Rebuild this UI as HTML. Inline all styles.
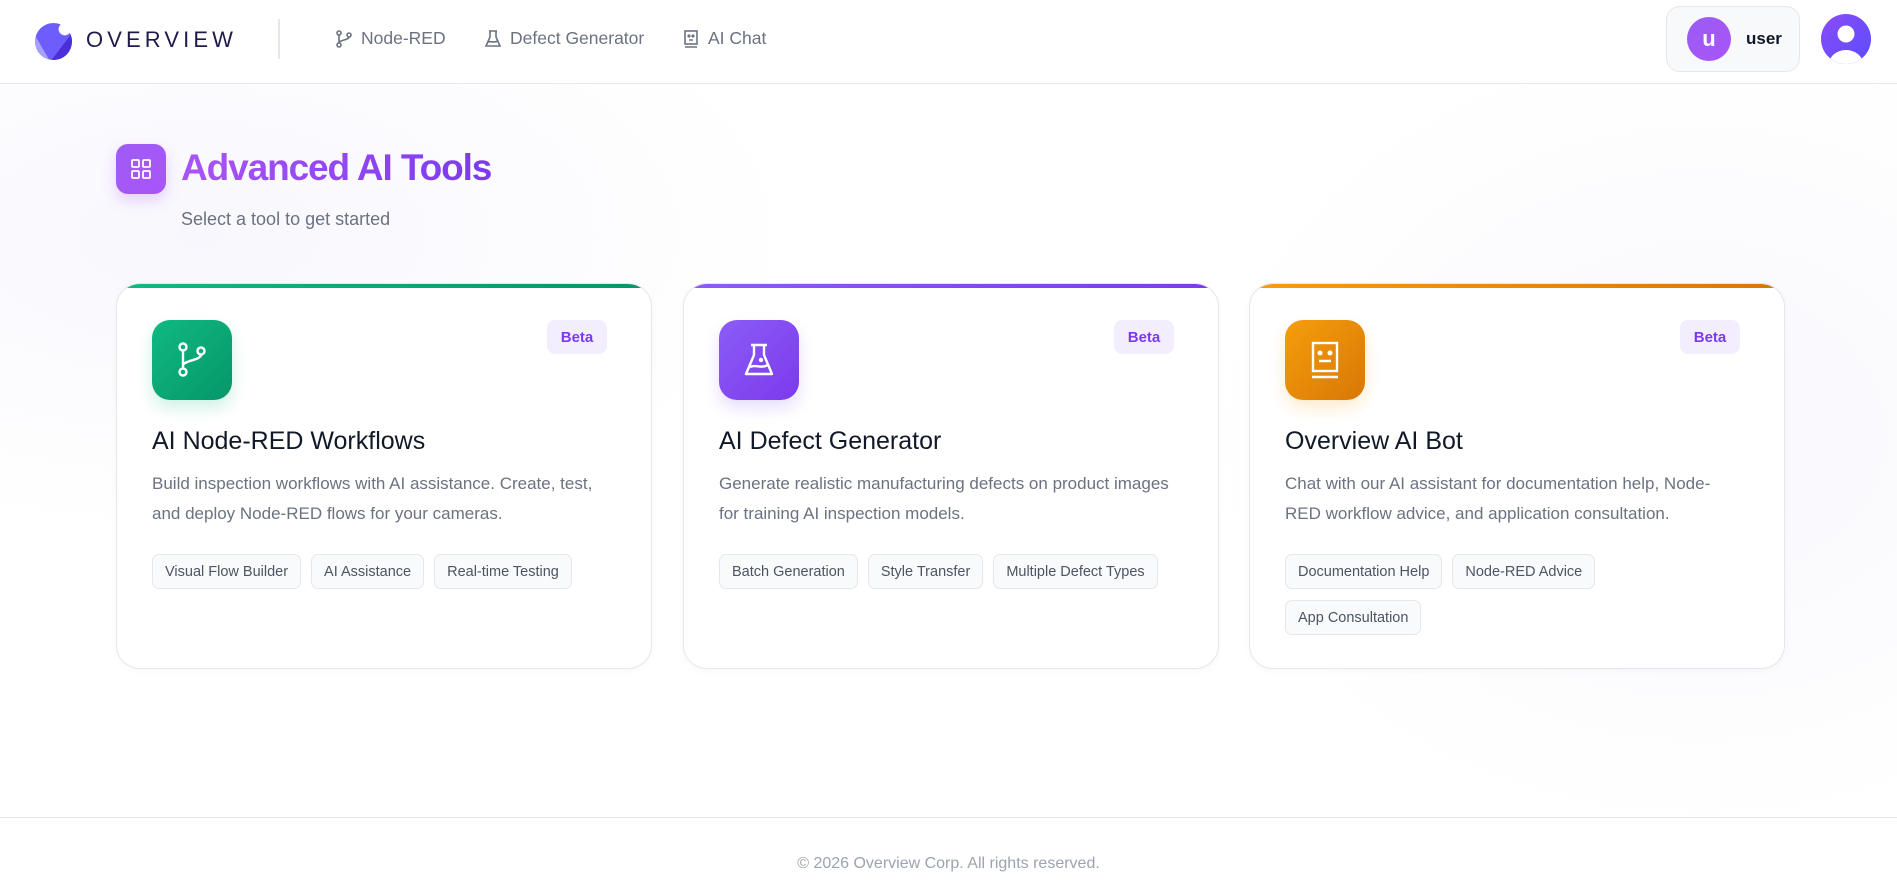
<!DOCTYPE html>
<html><head><meta charset="utf-8"><style>
*{box-sizing:border-box;margin:0;padding:0}
body{width:1897px;height:887px;overflow:hidden;font-family:"Liberation Sans",sans-serif;background:#fff;position:relative;color:#111827}
.hdr{position:absolute;left:0;top:0;width:1897px;height:84px;border-bottom:1.5px solid #e5e7eb;background:#fff}
.abs{position:absolute}
.nav{position:absolute;top:28px;font-size:17.5px;color:#6b7280;display:flex;align-items:center;gap:8px}
.main{position:absolute;left:0;top:84px;width:1897px;height:733px;background:radial-gradient(ellipse 600px 300px at 200px 150px,#f8f7fd,transparent),radial-gradient(ellipse 500px 400px at 1700px 350px,#f8f8fd,transparent),#fff}
.card{position:absolute;top:283px;width:536px;height:386px;border:1.5px solid #e5e7eb;border-radius:24px;background:#fff;overflow:hidden;box-shadow:0 2px 8px rgba(0,0,0,.03)}
.bar{position:absolute;left:0;top:0;right:0;height:4px}
.ic{position:absolute;left:35px;top:36px;width:80px;height:80px;border-radius:18px;display:flex;align-items:center;justify-content:center}
.beta{position:absolute;left:430px;top:36px;width:60px;height:34px;border-radius:8px;background:#f3eefe;color:#7c3aed;font-size:15px;font-weight:bold;display:flex;align-items:center;justify-content:center}
.t{position:absolute;left:35px;top:143px;font-size:25px;color:#111827}
.d{position:absolute;left:35px;top:185px;width:470px;font-size:17px;line-height:30px;color:#6b7280}
.tags{position:absolute;left:35px;top:270px;width:470px;display:flex;flex-wrap:wrap;gap:11px 10px}
.tag{height:35px;padding:0 12px;border:1.5px solid #e5e7eb;border-radius:7px;background:#f9fafb;font-size:14.5px;color:#4b5563;display:flex;align-items:center}
</style></head><body>
<div class="main"></div>
<div class="hdr">
<svg class="abs" style="left:35px;top:23px" width="37" height="37" viewBox="0 0 36 36"><defs><clipPath id="c"><circle cx="18" cy="18" r="18"/></clipPath></defs><g clip-path="url(#c)"><rect width="36" height="36" fill="#6d5efc"/><path d="M0 12 L14 36 L0 36Z" fill="#a5a0fb"/><path d="M36 10 L16 36 L36 36Z" fill="#4c2fd8"/></g><circle cx="29" cy="6" r="6" fill="#fff"/></svg>
<div class="abs" style="left:86px;top:27px;font-size:22px;letter-spacing:4.1px;color:#1e1b4b">OVERVIEW</div>
<div class="abs" style="left:278px;top:19px;width:1.5px;height:40px;background:#e5e7eb"></div>
<div class="nav" style="left:335px"><svg width="18" height="20" viewBox="0 0 18 20" fill="none" stroke="#6b7280" stroke-width="1.6"><circle cx="4" cy="4" r="2"/><circle cx="14" cy="6" r="2"/><circle cx="4" cy="16" r="2"/><path d="M4 6v8M14 8c0 3-10 3-10 6"/></svg>Node-RED</div>
<div class="nav" style="left:484px"><svg width="18" height="20" viewBox="0 0 18 20" fill="none" stroke="#6b7280" stroke-width="1.6"><path d="M5 2h8M6 2v6L2 17h14L12 8V2"/><path d="M4 13c3-1 6 1 10-1"/></svg>Defect Generator</div>
<div class="nav" style="left:682px"><svg width="18" height="20" viewBox="0 0 18 20" fill="none" stroke="#6b7280" stroke-width="1.6"><rect x="3" y="2" width="12" height="13"/><path d="M7 11h4M3 18h12"/><circle cx="7" cy="7" r=".8" fill="#6b7280"/><circle cx="11" cy="7" r=".8" fill="#6b7280"/></svg>AI Chat</div>
<div class="abs" style="left:1666px;top:6px;width:134px;height:66px;border:1.5px solid #e5e7eb;border-radius:14px;background:#f8f9fb"></div>
<div class="abs" style="left:1687px;top:17px;width:44px;height:44px;border-radius:50%;background:linear-gradient(135deg,#9b5cf6,#a855f7);color:#fff;font-size:22px;font-weight:bold;display:flex;align-items:center;justify-content:center">u</div>
<div class="abs" style="left:1746px;top:29px;font-size:17px;font-weight:bold;color:#111827">user</div>
<svg class="abs" style="left:1821px;top:14px" width="50" height="50" viewBox="0 0 50 50"><defs><clipPath id="p"><circle cx="25" cy="25" r="25"/></clipPath><linearGradient id="pg" x1="0" y1="0" x2="1" y2="1"><stop offset="0" stop-color="#8b4cf6"/><stop offset="1" stop-color="#5b4cff"/></linearGradient></defs><g clip-path="url(#p)"><rect width="50" height="50" fill="url(#pg)"/><circle cx="25" cy="20" r="8.5" fill="#fff"/><ellipse cx="25" cy="50" rx="17" ry="14" fill="#fff"/></g></svg>
</div>

<div class="abs" style="left:116px;top:144px;width:50px;height:50px;border-radius:12px;background:linear-gradient(135deg,#9f5cf6,#a855f7);box-shadow:0 6px 14px rgba(168,85,247,.25);display:flex;align-items:center;justify-content:center"><svg width="22" height="22" viewBox="0 0 22 22" fill="none" stroke="#fff" stroke-width="1.8"><rect x="2" y="2" width="7" height="7" rx="1"/><rect x="13" y="2" width="7" height="7" rx="1"/><rect x="2" y="13" width="7" height="7" rx="1"/><rect x="13" y="13" width="7" height="7" rx="1"/></svg></div>
<div class="abs" style="left:181px;top:147px;font-size:37px;font-weight:bold;letter-spacing:-1.1px;background:linear-gradient(90deg,#a855f7,#7c3aed);-webkit-background-clip:text;color:transparent">Advanced AI Tools</div>
<div class="abs" style="left:181px;top:209px;font-size:18px;color:#6b7280">Select a tool to get started</div>

<div class="card" style="left:116px"><div class="bar" style="background:linear-gradient(90deg,#10b981,#059669)"></div>
<div class="ic" style="background:linear-gradient(135deg,#10b981,#059669);box-shadow:0 8px 16px rgba(16,185,129,.2)"><svg width="34" height="38" viewBox="0 0 34 38" fill="none" stroke="#fff" stroke-width="2.4"><circle cx="8" cy="6" r="3.5"/><circle cx="26" cy="10" r="3.5"/><circle cx="8" cy="31" r="3.5"/><path d="M8 9.5v18M26 13.5c0 6-18 6-18 11"/></svg></div>
<div class="beta">Beta</div>
<div class="t">AI Node-RED Workflows</div>
<div class="d">Build inspection workflows with AI assistance. Create, test,<br>and deploy Node-RED flows for your cameras.</div>
<div class="tags"><div class="tag">Visual Flow Builder</div><div class="tag">AI Assistance</div><div class="tag">Real-time Testing</div></div></div>

<div class="card" style="left:683px"><div class="bar" style="background:linear-gradient(90deg,#8b5cf6,#7c3aed)"></div>
<div class="ic" style="background:linear-gradient(135deg,#8b5cf6,#7c3aed);box-shadow:0 8px 16px rgba(139,92,246,.2)"><svg width="34" height="38" viewBox="0 0 34 38" fill="none" stroke="#fff" stroke-width="2.4" stroke-linejoin="round"><path d="M9 4h16M12 4v10L4 33h26L22 14V4"/><path d="M8 26c6-3 10 2 18-2"/><circle cx="19" cy="19" r="1" fill="#fff"/></svg></div>
<div class="beta">Beta</div>
<div class="t">AI Defect Generator</div>
<div class="d">Generate realistic manufacturing defects on product images<br>for training AI inspection models.</div>
<div class="tags"><div class="tag">Batch Generation</div><div class="tag">Style Transfer</div><div class="tag">Multiple Defect Types</div></div></div>

<div class="card" style="left:1249px"><div class="bar" style="background:linear-gradient(90deg,#f59e0b,#d97706)"></div>
<div class="ic" style="background:linear-gradient(135deg,#f59e0b,#d97706);box-shadow:0 8px 16px rgba(245,158,11,.2)"><svg width="34" height="40" viewBox="0 0 34 40" fill="none" stroke="#fff" stroke-width="2.4"><rect x="5" y="3" width="24" height="28"/><path d="M11 21h12M4 37h26"/><circle cx="12" cy="13" r="1.3" fill="#fff"/><circle cx="22" cy="13" r="1.3" fill="#fff"/></svg></div>
<div class="beta">Beta</div>
<div class="t">Overview AI Bot</div>
<div class="d">Chat with our AI assistant for documentation help, Node-<br>RED workflow advice, and application consultation.</div>
<div class="tags" style="width:340px"><div class="tag">Documentation Help</div><div class="tag">Node-RED Advice</div><div class="tag">App Consultation</div></div></div>

<div class="abs" style="left:0;top:817px;width:1897px;height:70px;border-top:1.5px solid #e5e7eb;background:#fff"></div>
<div class="abs" style="left:0;top:855px;width:1897px;text-align:center;font-size:16px;color:#9ca3af">© 2026 Overview Corp. All rights reserved.</div>
</body></html>
